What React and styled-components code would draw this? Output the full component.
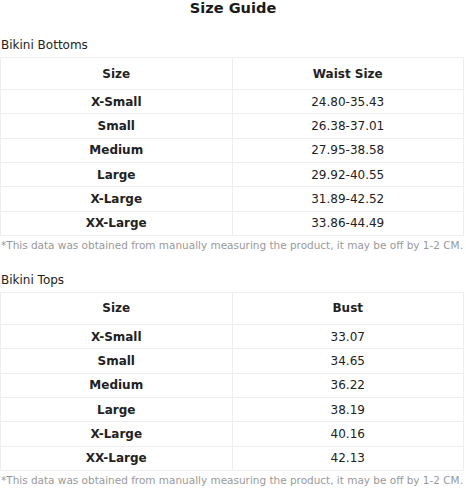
import React from "react";
import styled, { createGlobalStyle } from "styled-components";

const Global = createGlobalStyle`
  html, body { margin: 0; padding: 0; background: #fff; }
  body { font-family: "DejaVu Sans", Verdana, sans-serif; color: #222; }
`;

const Page = styled.div`
  width: 466px;
  box-sizing: border-box;
`;

const Title = styled.h1`
  margin: 0;
  text-align: center;
  font-size: 14.6px;
  line-height: 16px;
  font-weight: bold;
  color: #1a1a1a;
`;

const SectionTitle = styled.div`
  font-size: 12px;
  line-height: 14px;
  padding-left: 1px;
  margin-top: ${(p) => p.$top}px;
  margin-bottom: 5px;
  color: #222;
`;

const Table = styled.table`
  width: 464px;
  border-collapse: collapse;
  table-layout: fixed;
  font-size: 12px;
  color: #222;
`;

const Th = styled.th`
  border: 1px solid #eeeeee;
  height: 31px;
  padding: 0;
  text-align: center;
  font-weight: bold;
`;

const Td = styled.td`
  border: 1px solid #eeeeee;
  height: 23.33px;
  padding: 0;
  text-align: center;
  font-weight: ${(p) => (p.$bold ? "bold" : "normal")};
`;

const Note = styled.div`
  font-size: 10.48px;
  line-height: 13px;
  color: #999;
  margin-top: 3px;
  padding-left: 1px;
  white-space: nowrap;
`;

const bottoms = [
  ["X-Small", "24.80-35.43"],
  ["Small", "26.38-37.01"],
  ["Medium", "27.95-38.58"],
  ["Large", "29.92-40.55"],
  ["X-Large", "31.89-42.52"],
  ["XX-Large", "33.86-44.49"],
];

const tops = [
  ["X-Small", "33.07"],
  ["Small", "34.65"],
  ["Medium", "36.22"],
  ["Large", "38.19"],
  ["X-Large", "40.16"],
  ["XX-Large", "42.13"],
];

const NOTE =
  "*This data was obtained from manually measuring the product, it may be off by 1-2 CM.";

function SizeTable({ label, measure, rows, top }) {
  return (
    <section>
      <SectionTitle $top={top}>{label}</SectionTitle>
      <Table>
        <thead>
          <tr>
            <Th>Size</Th>
            <Th>{measure}</Th>
          </tr>
        </thead>
        <tbody>
          {rows.map(([s, v]) => (
            <tr key={s}>
              <Td $bold>{s}</Td>
              <Td>{v}</Td>
            </tr>
          ))}
        </tbody>
      </Table>
      <Note>{NOTE}</Note>
    </section>
  );
}

export default function App() {
  return (
    <Page>
      <Global />
      <Title>Size Guide</Title>
      <SizeTable label="Bikini Bottoms" measure="Waist Size" rows={bottoms} top={22} />
      <SizeTable label="Bikini Tops" measure="Bust" rows={tops} top={21} />
    </Page>
  );
}
